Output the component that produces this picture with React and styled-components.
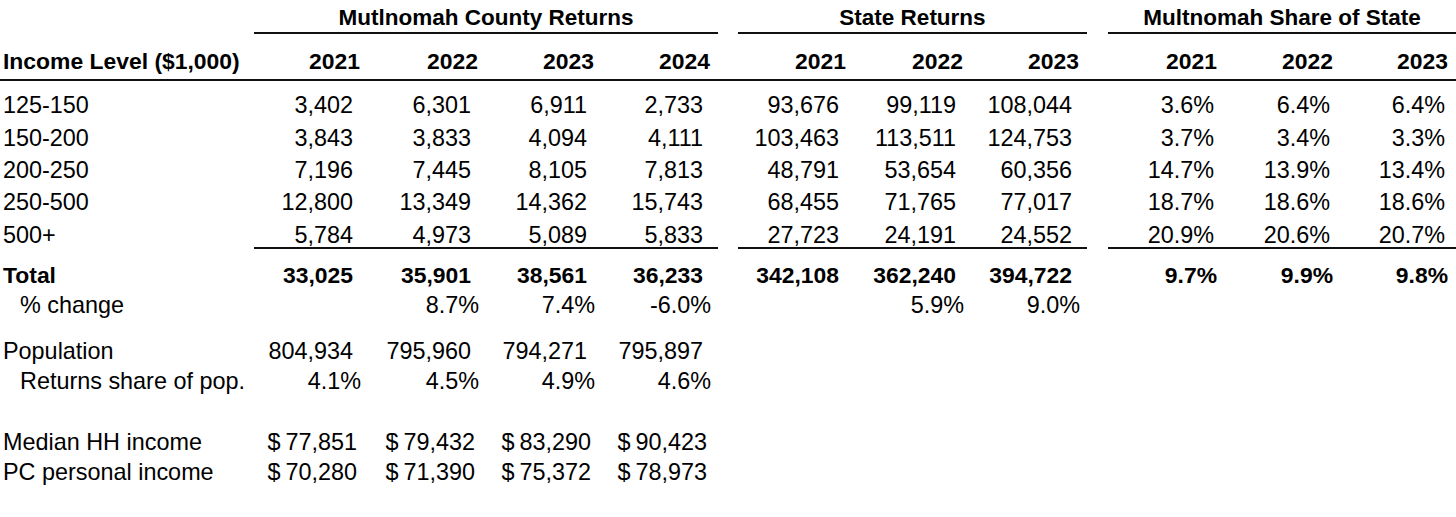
import React from "react";
import styled, { createGlobalStyle } from "styled-components";

// ==== Data ====
const dataRows = [
  { label: "125-150", m: ["3,402", "6,301", "6,911", "2,733"], s: ["93,676", "99,119", "108,044"], h: ["3.6%", "6.4%", "6.4%"] },
  { label: "150-200", m: ["3,843", "3,833", "4,094", "4,111"], s: ["103,463", "113,511", "124,753"], h: ["3.7%", "3.4%", "3.3%"] },
  { label: "200-250", m: ["7,196", "7,445", "8,105", "7,813"], s: ["48,791", "53,654", "60,356"], h: ["14.7%", "13.9%", "13.4%"] },
  { label: "250-500", m: ["12,800", "13,349", "14,362", "15,743"], s: ["68,455", "71,765", "77,017"], h: ["18.7%", "18.6%", "18.6%"] },
  { label: "500+", m: ["5,784", "4,973", "5,089", "5,833"], s: ["27,723", "24,191", "24,552"], h: ["20.9%", "20.6%", "20.7%"] },
];

const firstRowHeight = 35.8;
const rowPitch = 32.25;

const GlobalStyle = createGlobalStyle`
  html, body {
    margin: 0;
    padding: 0;
    background: #ffffff;
  }
  body {
    font-family: "Liberation Sans", Arial, Helvetica, sans-serif;
    color: #000;
  }
`;

const Sheet = styled.div`
  width: 1456px;
  height: 517px;
  overflow: hidden;
  font-size: 23.4px;
  background: #fff;
`;

const Row = styled.div`
  display: grid;
  grid-template-columns: 254px 114px 118px 116px 116px 20px 116px 117px 116px 21px 117px 116px 115px;
  height: ${(p) => p.$h}px;
  border-bottom: ${(p) => (p.$rule ? "2.5px solid #111" : "none")};
`;

const Cell = styled.div`
  display: flex;
  align-items: flex-end;
  justify-content: ${(p) => (p.$left ? "flex-start" : "flex-end")};
  padding-left: ${(p) => (p.$indent ? 20 : 3)}px;
  padding-right: ${(p) => p.$pad || 0}px;
  padding-bottom: ${(p) => p.$bottom || 0}px;
  line-height: 18px;
  font-weight: ${(p) => (p.$bold ? 700 : 400)};
  font-size: ${(p) => (p.$bold ? "22.9px" : "inherit")};
  white-space: nowrap;
  border-bottom: ${(p) => (p.$under ? "2px solid #111" : "2px solid transparent")};
  box-sizing: border-box;
`;

const GroupTitle = styled.div`
  grid-column: span ${(p) => p.$span};
  display: flex;
  align-items: flex-end;
  justify-content: center;
  padding-bottom: 5px;
  line-height: 18px;
  font-size: 22.5px;
  font-weight: 700;
  border-bottom: 2px solid #111;
  white-space: nowrap;
`;

const Dollar = styled.span`
  margin-right: 5px;
`;

const Money = ({ value }) => (
  <>
    <Dollar>$</Dollar>
    {value}
  </>
);

const Gap = () => <div />;

// a row of values across the three sections; each entry is [text, padding]
const ValueRow = ({ h, label, indent, bold, under, m = [], s = [], sh = [] }) => {
  const lift = under ? 3 : 0;
  return (
    <Row $h={h}>
      <Cell $left $indent={indent} $bold={bold} $bottom={lift}>
        {label}
      </Cell>
      {[0, 1, 2, 3].map((i) => (
        <Cell key={"m" + i} $pad={m[i] ? m[i][1] : 0} $bold={bold} $under={under} $bottom={lift}>
          {m[i] ? m[i][0] : ""}
        </Cell>
      ))}
      <Gap />
      {[0, 1, 2].map((i) => (
        <Cell key={"s" + i} $pad={s[i] ? s[i][1] : 0} $bold={bold} $under={under} $bottom={lift}>
          {s[i] ? s[i][0] : ""}
        </Cell>
      ))}
      <Gap />
      {[0, 1, 2].map((i) => (
        <Cell key={"h" + i} $pad={sh[i] ? sh[i][1] : 0} $bold={bold} $under={under} $bottom={lift}>
          {sh[i] ? sh[i][0] : ""}
        </Cell>
      ))}
    </Row>
  );
};

const num = (arr) => arr.map((v) => (v === "" ? null : [v, 15]));
const pct = (arr) => arr.map((v) => (v === "" ? null : [v, 7]));
const share = (arr) => arr.map((v) => [v, 11]);
const money = (arr) => arr.map((v) => [<Money value={v} />, 11]);

export default function App() {
  return (
    <Sheet>
      <GlobalStyle />

      <Row $h={33.5}>
        <div />
        <GroupTitle $span={4}>Mutlnomah County Returns</GroupTitle>
        <Gap />
        <GroupTitle $span={3}>State Returns</GroupTitle>
        <Gap />
        <GroupTitle $span={3}>Multnomah Share of State</GroupTitle>
      </Row>

      <Row $h={45} $rule>
        <Cell $left $bold $bottom={7}>Income Level ($1,000)</Cell>
        {["2021", "2022", "2023", "2024"].map((y) => (
          <Cell key={"my" + y} $bold $pad={8} $bottom={7}>{y}</Cell>
        ))}
        <Gap />
        {["2021", "2022", "2023"].map((y) => (
          <Cell key={"sy" + y} $bold $pad={8} $bottom={7}>{y}</Cell>
        ))}
        <Gap />
        {["2021", "2022", "2023"].map((y) => (
          <Cell key={"hy" + y} $bold $pad={8} $bottom={7}>{y}</Cell>
        ))}
      </Row>

      {dataRows.map((r, i) => (
        <ValueRow
          key={r.label}
          h={(i === 0 ? firstRowHeight : rowPitch) + (i === dataRows.length - 1 ? 4 : 0)}
          label={r.label}
          under={i === dataRows.length - 1}
          m={num(r.m)}
          s={num(r.s)}
          sh={share(r.h)}
        />
      ))}

      <ValueRow
        h={37}
        label="Total"
        bold
        m={num(["33,025", "35,901", "38,561", "36,233"])}
        s={num(["342,108", "362,240", "394,722"])}
        sh={[["9.7%", 8], ["9.9%", 8], ["9.8%", 8]]}
      />
      <ValueRow
        h={30}
        label="% change"
        indent
        m={pct(["", "8.7%", "7.4%", "-6.0%"])}
        s={pct(["", "5.9%", "9.0%"])}
      />

      <ValueRow h={45.5} label="Population" m={num(["804,934", "795,960", "794,271", "795,897"])} />
      <ValueRow h={30.5} label="Returns share of pop." indent m={pct(["4.1%", "4.5%", "4.9%", "4.6%"])} />

      <ValueRow h={61} label="Median HH income" m={money(["77,851", "79,432", "83,290", "90,423"])} />
      <ValueRow h={29.5} label="PC personal income" m={money(["70,280", "71,390", "75,372", "78,973"])} />
    </Sheet>
  );
}
